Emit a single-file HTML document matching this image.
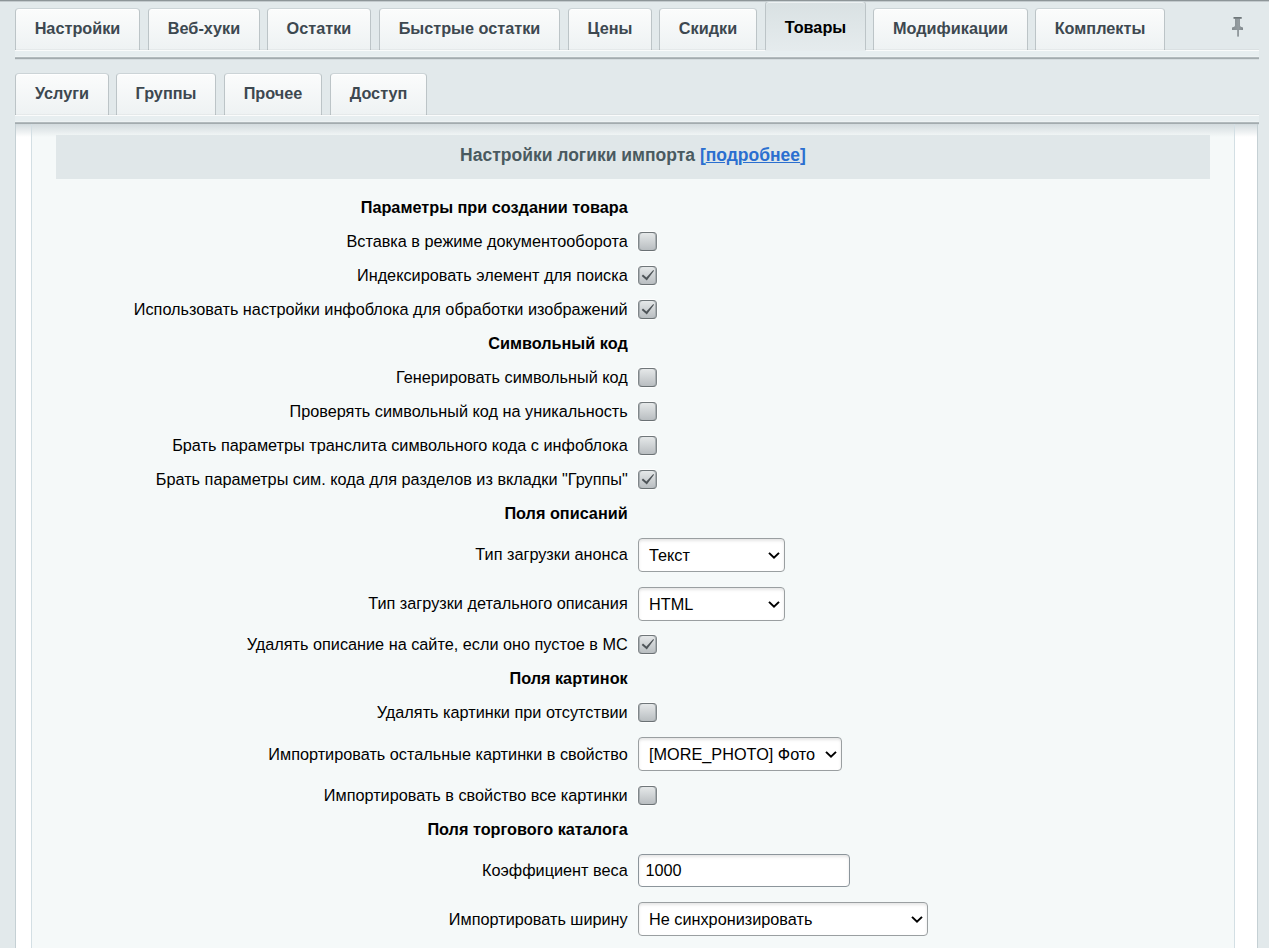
<!DOCTYPE html>
<html><head><meta charset="utf-8">
<style>
*{box-sizing:border-box}
html,body{margin:0;padding:0}
body{width:1269px;height:948px;overflow:hidden;position:relative;background:#e2e9eb;font-family:"Liberation Sans",sans-serif;font-size:16.25px;color:#000}
.topline{position:absolute;left:0;top:0;width:1269px;height:2px;background:linear-gradient(#8d9598 0,#8d9598 1px,#c3cacd 1px)}
.tab{position:absolute;height:42px;border:1px solid #bcc4c7;border-top-color:#ccd4d7;border-bottom:none;border-radius:4px 4px 0 0;background:linear-gradient(#fbfcfc,#eef2f3);box-shadow:inset 0 1px 0 #fff;color:#3d4850;font-weight:bold;text-align:center;line-height:38px;white-space:nowrap}
.tab.act{background:linear-gradient(#d9e1e3,#e5ebed);color:#000;box-shadow:inset 0 1px 0 #eef2f3,0 1px 0 #e6ecee;}
.strip{position:absolute;left:15px;width:1244px;height:9px;background:linear-gradient(#fafbfb 0,#fafbfb 1px,#e7eef0 1px,#e7eef0 6px,#edf2f3 6px,#edf2f3 7px,#b2babd 7px,#b2babd 8px,#a3abae 8px,#a3abae 9px);box-shadow:0 1px 0 #d5dcdf,0 -1px 0 rgba(0,0,0,.035)}
.wrap{position:absolute;left:15px;top:124px;width:1243px;height:830px;border:1px solid #c5d0d4;border-bottom:none;background:#fff}
.wrapgrad{position:absolute;left:16px;top:124px;width:1241px;height:13px;background:linear-gradient(#d3dbde,rgba(255,255,255,0))}
.inner{position:absolute;left:31px;top:124px;width:1204px;height:830px;border:1px solid #d3dfe4;border-top:none;border-bottom:none;background:#f5f9f9}
.innergrad{position:absolute;left:32px;top:124px;width:1202px;height:13px;background:linear-gradient(#d3dbde,rgba(245,249,249,0))}
.hdr{position:absolute;left:56px;top:135px;width:1154px;height:44px;background:#e0e7e9;text-align:center;font-weight:bold;font-size:17.5px;color:#4a5a60;line-height:40px}
.hdr a{color:#2b6fd0;text-decoration:underline}
.hdr .br{color:#2b6fd0}
.lbl{position:absolute;right:641.3px;white-space:nowrap;line-height:20px;height:20px}
.b{font-weight:bold}
.cb{position:absolute;left:638px;width:19px;height:19px;border:1px solid;border-color:#6f7679 #7f8689 #6a7174;border-radius:4px;background:linear-gradient(#e5e8e9,#b9bec1);box-shadow:0 0 0 1px rgba(255,255,255,.8), inset 1px 0 0 #a9afb2, inset -1px 0 0 #a9afb2}
.cb svg{position:absolute;left:0;top:0}
.sel{position:absolute;left:638px;height:34px;border:1px solid #9a9fa1;border-radius:4px;background:#fff;box-shadow:inset 0 2px 3px rgba(0,0,0,.1);line-height:32px;padding-left:10px;white-space:nowrap}
.sel svg{position:absolute;right:4px;top:13px}
.sel.inp{height:33px;line-height:30px;padding-left:6.5px;border-radius:4px;border-color:#8c959b}
.pin{position:absolute;left:1232px;top:17px}
</style></head><body>
<div class="topline"></div>

<div class="tab" style="left:15px;top:8px;width:125px">Настройки</div>
<div class="tab" style="left:148px;top:8px;width:112px">Веб-хуки</div>
<div class="tab" style="left:267px;top:8px;width:104px">Остатки</div>
<div class="tab" style="left:379px;top:8px;width:181px">Быстрые остатки</div>
<div class="tab" style="left:568px;top:8px;width:84px">Цены</div>
<div class="tab" style="left:659px;top:8px;width:98px">Скидки</div>
<div class="tab act" style="left:765px;top:1px;width:101px;height:49px;line-height:50px;z-index:2">Товары</div>
<div class="tab" style="left:873px;top:8px;width:155px">Модификации</div>
<div class="tab" style="left:1035px;top:8px;width:130px">Комплекты</div>
<svg class="pin" width="12" height="20" viewBox="0 0 12 20"><defs><linearGradient id="pg" x1="0" x2="1" y1="0" y2="0"><stop offset="0" stop-color="#858d91"/><stop offset=".6" stop-color="#959da1"/><stop offset="1" stop-color="#7f878b"/></linearGradient></defs><path d="M3 1.5 H8 V8.8 Q8 10 11 10.6 V12.9 H0 V10.6 Q3 10 3 8.8 Z" fill="url(#pg)"/><rect x="1.5" y="0" width="8.2" height="1.8" fill="#6e7679"/><rect x="5.2" y="12.6" width="1.7" height="7" fill="#8a9296"/></svg>
<div class="strip" style="top:50px"></div>

<div class="tab" style="left:15px;top:73px;width:94px">Услуги</div>
<div class="tab" style="left:116px;top:73px;width:100px">Группы</div>
<div class="tab" style="left:224px;top:73px;width:98px">Прочее</div>
<div class="tab" style="left:330px;top:73px;width:97px">Доступ</div>
<div class="strip" style="top:115px"></div>

<div class="wrap"></div>
<div class="wrapgrad"></div>
<div class="inner"></div>
<div class="innergrad"></div>
<div class="hdr">Настройки логики импорта <span class="br">[<a>подробнее</a>]</span></div>

<!--ROWS-->
<div class="lbl b" style="top:197px">Параметры при создании товара</div>
<div class="lbl" style="top:231px">Вставка в режиме документооборота</div>
<div class="cb" style="top:232px"></div>
<div class="lbl" style="top:265px">Индексировать элемент для поиска</div>
<div class="cb" style="top:266px"><svg width="19" height="19" viewBox="0 0 19 19" style="left:-1px;top:-1px"><path d="M3.7 9.9 L5.0 8.4 L8.4 11.4 L15.3 4.0 L16.0 4.7 L8.8 14.4 Z" fill="#4f5559"/></svg></div>
<div class="lbl" style="top:299px">Использовать настройки инфоблока для обработки изображений</div>
<div class="cb" style="top:300px"><svg width="19" height="19" viewBox="0 0 19 19" style="left:-1px;top:-1px"><path d="M3.7 9.9 L5.0 8.4 L8.4 11.4 L15.3 4.0 L16.0 4.7 L8.8 14.4 Z" fill="#4f5559"/></svg></div>
<div class="lbl b" style="top:333px">Символьный код</div>
<div class="lbl" style="top:367px">Генерировать символьный код</div>
<div class="cb" style="top:368px"></div>
<div class="lbl" style="top:401px">Проверять символьный код на уникальность</div>
<div class="cb" style="top:402px"></div>
<div class="lbl" style="top:435px">Брать параметры транслита символьного кода с инфоблока</div>
<div class="cb" style="top:436px"></div>
<div class="lbl" style="top:469px">Брать параметры сим. кода для разделов из вкладки &quot;Группы&quot;</div>
<div class="cb" style="top:470px"><svg width="19" height="19" viewBox="0 0 19 19" style="left:-1px;top:-1px"><path d="M3.7 9.9 L5.0 8.4 L8.4 11.4 L15.3 4.0 L16.0 4.7 L8.8 14.4 Z" fill="#4f5559"/></svg></div>
<div class="lbl b" style="top:503px">Поля описаний</div>
<div class="lbl" style="top:544px">Тип загрузки анонса</div>
<div class="sel" style="top:538px;width:147px">Текст<svg width="12" height="8" viewBox="0 0 12 8"><path d="M1 0.9 L6 5.7 L11 0.9" fill="none" stroke="#000" stroke-width="2"/></svg></div>
<div class="lbl" style="top:593px">Тип загрузки детального описания</div>
<div class="sel" style="top:587px;width:147px">HTML<svg width="12" height="8" viewBox="0 0 12 8"><path d="M1 0.9 L6 5.7 L11 0.9" fill="none" stroke="#000" stroke-width="2"/></svg></div>
<div class="lbl" style="top:634px">Удалять описание на сайте, если оно пустое в МС</div>
<div class="cb" style="top:635px"><svg width="19" height="19" viewBox="0 0 19 19" style="left:-1px;top:-1px"><path d="M3.7 9.9 L5.0 8.4 L8.4 11.4 L15.3 4.0 L16.0 4.7 L8.8 14.4 Z" fill="#4f5559"/></svg></div>
<div class="lbl b" style="top:668px">Поля картинок</div>
<div class="lbl" style="top:702px">Удалять картинки при отсутствии</div>
<div class="cb" style="top:703px"></div>
<div class="lbl" style="top:744px">Импортировать остальные картинки в свойство</div>
<div class="sel" style="top:737px;width:204px">[MORE_PHOTO] Фото<svg width="12" height="8" viewBox="0 0 12 8"><path d="M1 0.9 L6 5.7 L11 0.9" fill="none" stroke="#000" stroke-width="2"/></svg></div>
<div class="lbl" style="top:785px">Импортировать в свойство все картинки</div>
<div class="cb" style="top:786px"></div>
<div class="lbl b" style="top:819px">Поля торгового каталога</div>
<div class="lbl" style="top:860px">Коэффициент веса</div>
<div class="sel inp" style="top:854px;width:212px">1000</div>
<div class="lbl" style="top:909px">Импортировать ширину</div>
<div class="sel" style="top:902px;width:290px">Не синхронизировать<svg width="12" height="8" viewBox="0 0 12 8"><path d="M1 0.9 L6 5.7 L11 0.9" fill="none" stroke="#000" stroke-width="2"/></svg></div>
<!--/ROWS-->
</body></html>
